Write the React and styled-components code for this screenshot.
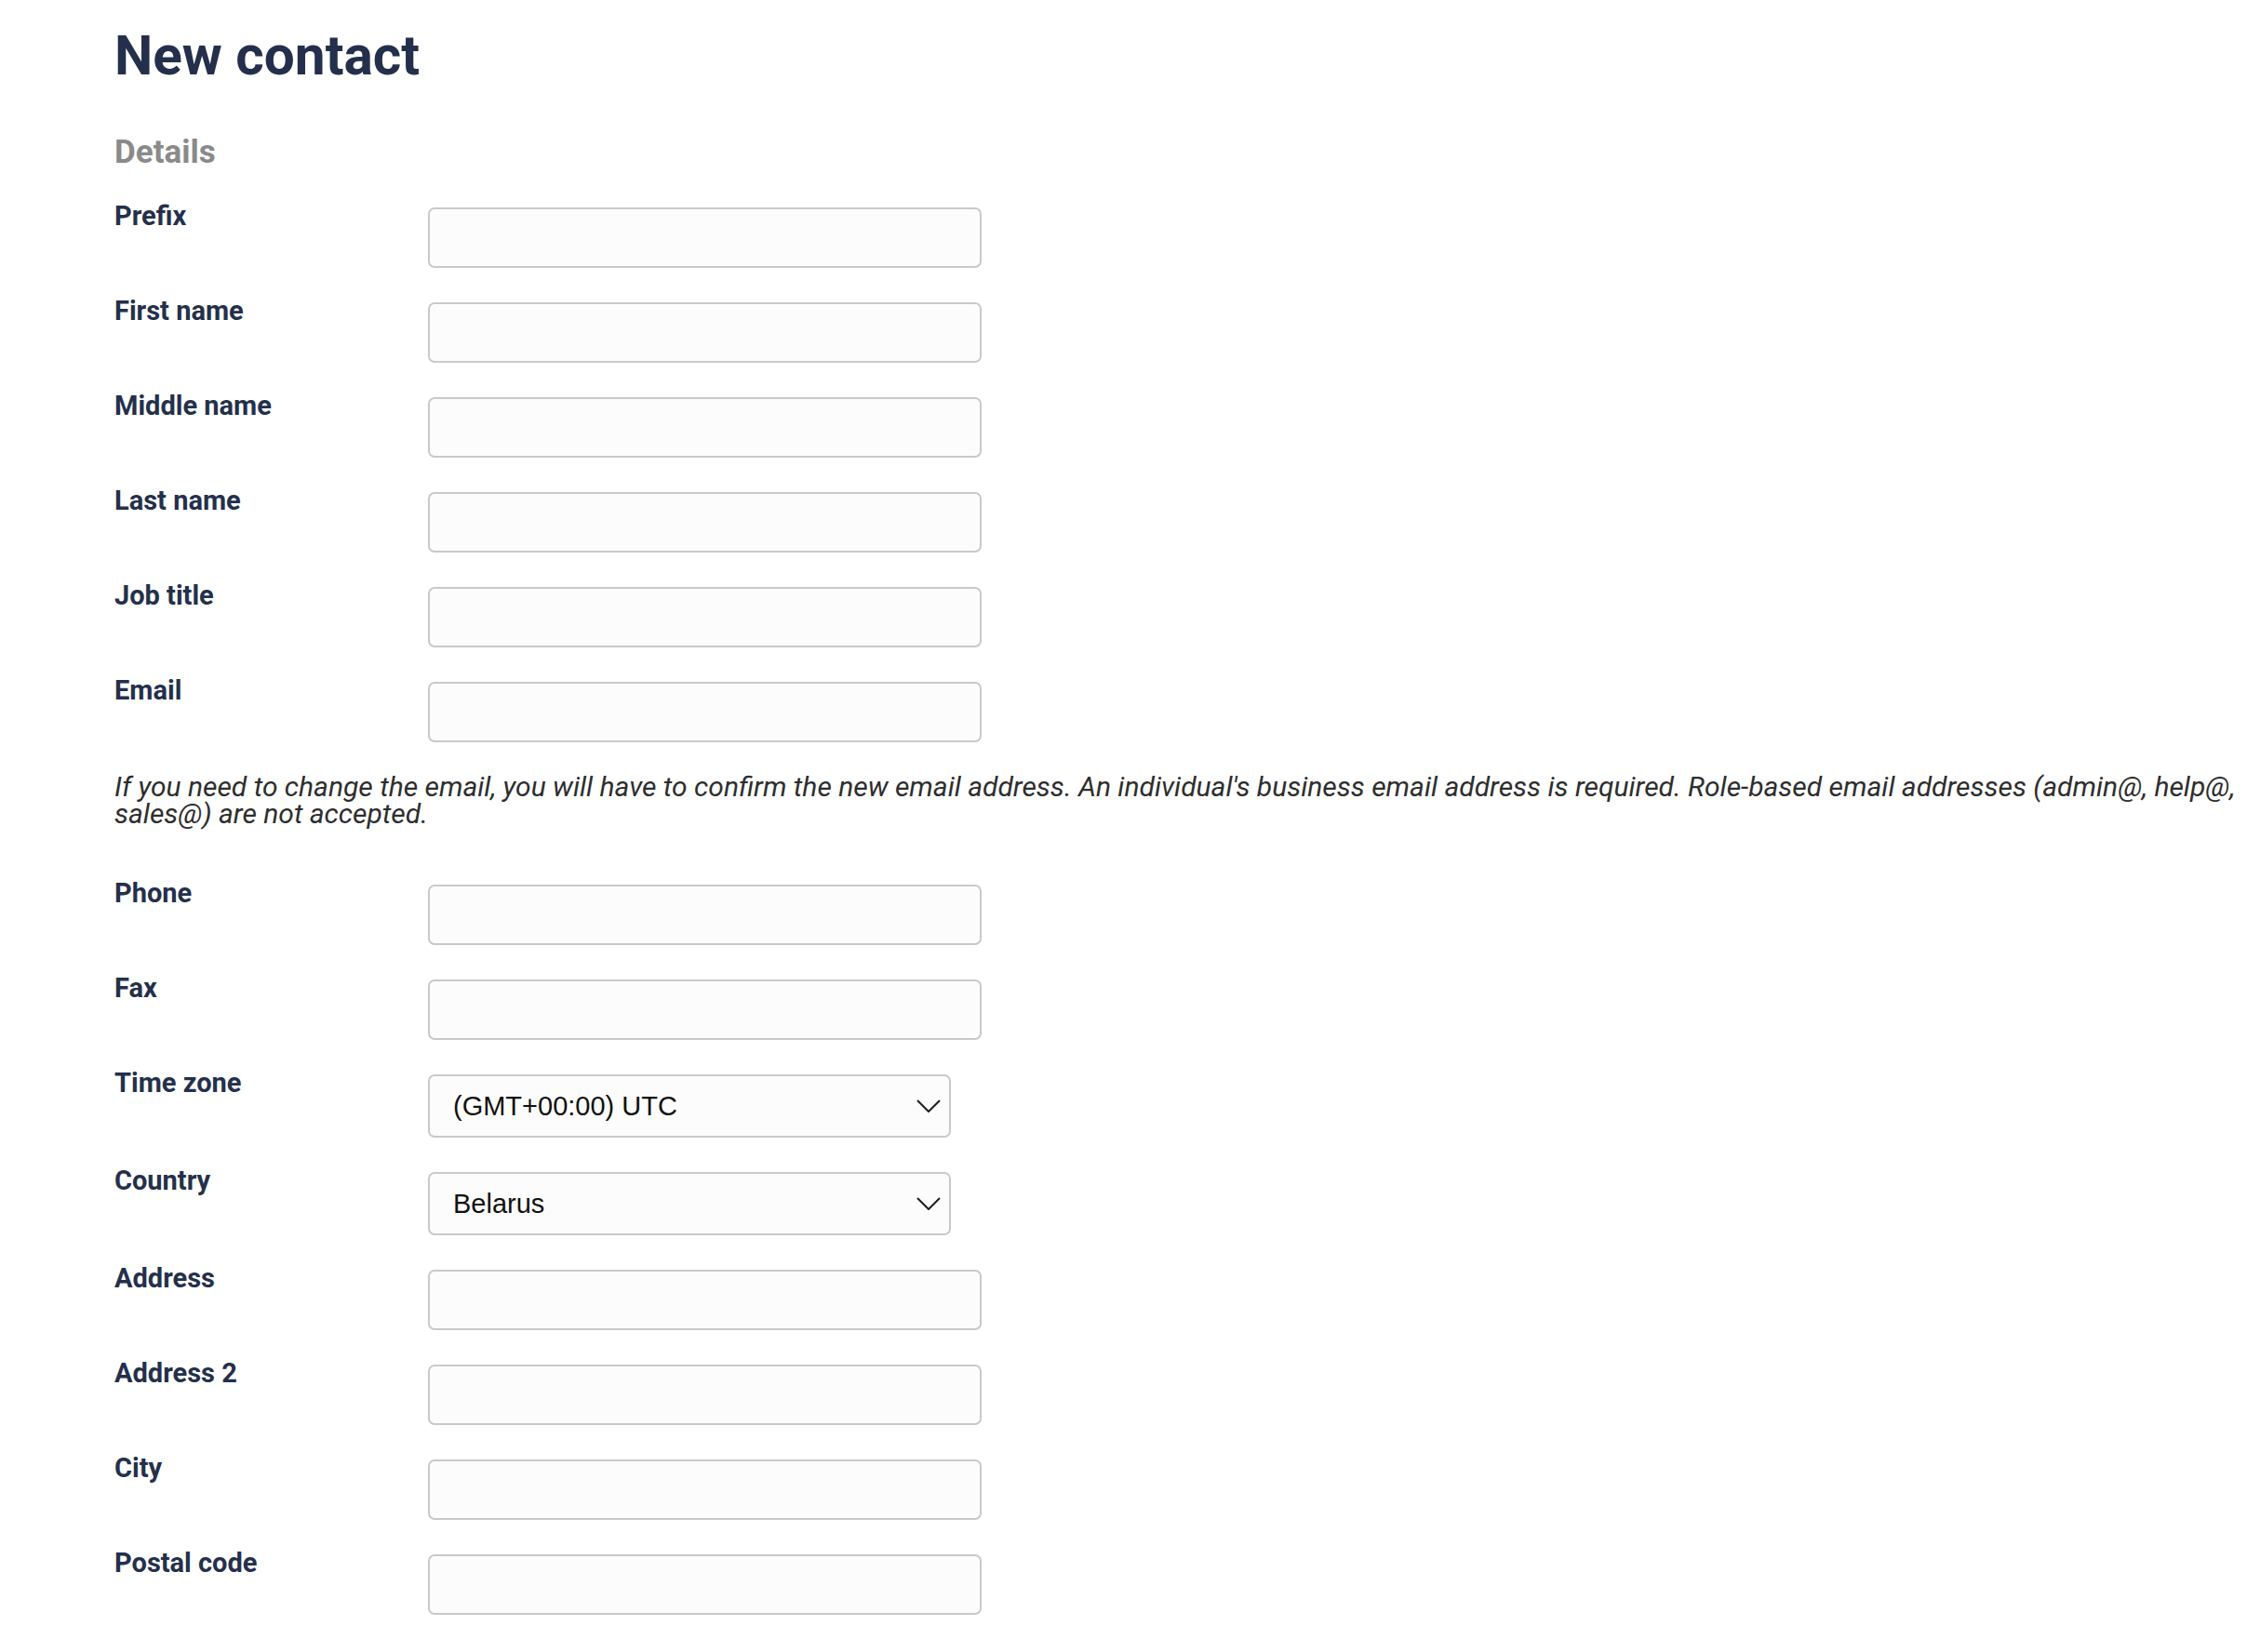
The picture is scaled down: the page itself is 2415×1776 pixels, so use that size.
import styled, { createGlobalStyle } from "styled-components";

const GlobalStyle = createGlobalStyle`
  body {
    margin: 0;
    background: #ffffff;
    font-family: Roboto, "Liberation Sans", sans-serif;
  }
`;

const fields = [
  { label: "Prefix" },
  { label: "First name" },
  { label: "Middle name" },
  { label: "Last name" },
  { label: "Job title" },
  { label: "Email" },
  { help: true },
  { label: "Phone" },
  { label: "Fax" },
  { label: "Time zone", select: "(GMT+00:00) UTC" },
  { label: "Country", select: "Belarus" },
  { label: "Address" },
  { label: "Address 2" },
  { label: "City" },
  { label: "Postal code" },
];

export default function App() {
  return (
    <>
      <GlobalStyle />
      <Page>
        <Title>New contact</Title>
        <SectionTitle>Details</SectionTitle>
        <Form>
          {fields.map((field, i) =>
            field.help ? (
              <HelpText key={i}>
                If you need to change the email, you will have to confirm the
                new email address. An individual's business email address is
                required. Role-based email addresses (admin@, help@, sales@)
                are not accepted.
              </HelpText>
            ) : (
              <Row key={field.label}>
                <Label>{field.label}</Label>
                {field.select ? (
                  <SelectWrap>
                    <Select defaultValue={field.select}>
                      <option>{field.select}</option>
                    </Select>
                    <Chevron viewBox="0 0 26 14" width="26" height="14">
                      <polyline
                        points="1,1 13,13 25,1"
                        fill="none"
                        stroke="#1d1d1d"
                        strokeWidth="2"
                      />
                    </Chevron>
                  </SelectWrap>
                ) : (
                  <Input type="text" />
                )}
              </Row>
            )
          )}
        </Form>
      </Page>
    </>
  );
}

const Page = styled.main`
  padding: 31px 0 40px 123px;
`;

const Title = styled.h1`
  margin: 0;
  font-size: 58.5px;
  line-height: 1;
  font-weight: 700;
  color: #24304b;
`;

const SectionTitle = styled.h2`
  margin: 56px 0 0 0;
  font-size: 35px;
  line-height: 1;
  font-weight: 700;
  color: #8a8a8a;
`;

const Form = styled.div`
  display: flex;
  flex-direction: column;
  gap: 37px;
  margin-top: 42px;
`;

const Row = styled.div`
  display: grid;
  grid-template-columns: 337px auto;
  align-items: start;
`;

const Label = styled.label`
  margin-top: -5px;
  font-size: 29px;
  line-height: 28px;
  font-weight: 700;
  color: #24304b;
`;

const Input = styled.input`
  box-sizing: border-box;
  width: 595px;
  height: 65px;
  border: 2px solid #c9c9c9;
  border-radius: 7px;
  background: #fcfcfc;
  outline: none;
`;

const SelectWrap = styled.div`
  position: relative;
  width: 562px;
  height: 68px;
`;

const Select = styled.select`
  appearance: none;
  box-sizing: border-box;
  width: 100%;
  height: 100%;
  padding: 0 50px 0 25px;
  border: 2px solid #c9c9c9;
  border-radius: 7px;
  background: #fcfcfc;
  font-family: "Liberation Sans", Arial, sans-serif;
  font-size: 29px;
  color: #111111;
  outline: none;
`;

const Chevron = styled.svg`
  position: absolute;
  right: 11px;
  top: 27px;
  pointer-events: none;
`;

const HelpText = styled.p`
  margin: -4px 0 25px 0;
  font-size: 30px;
  line-height: 29px;
  font-style: italic;
  color: #2e2e2e;
`;
